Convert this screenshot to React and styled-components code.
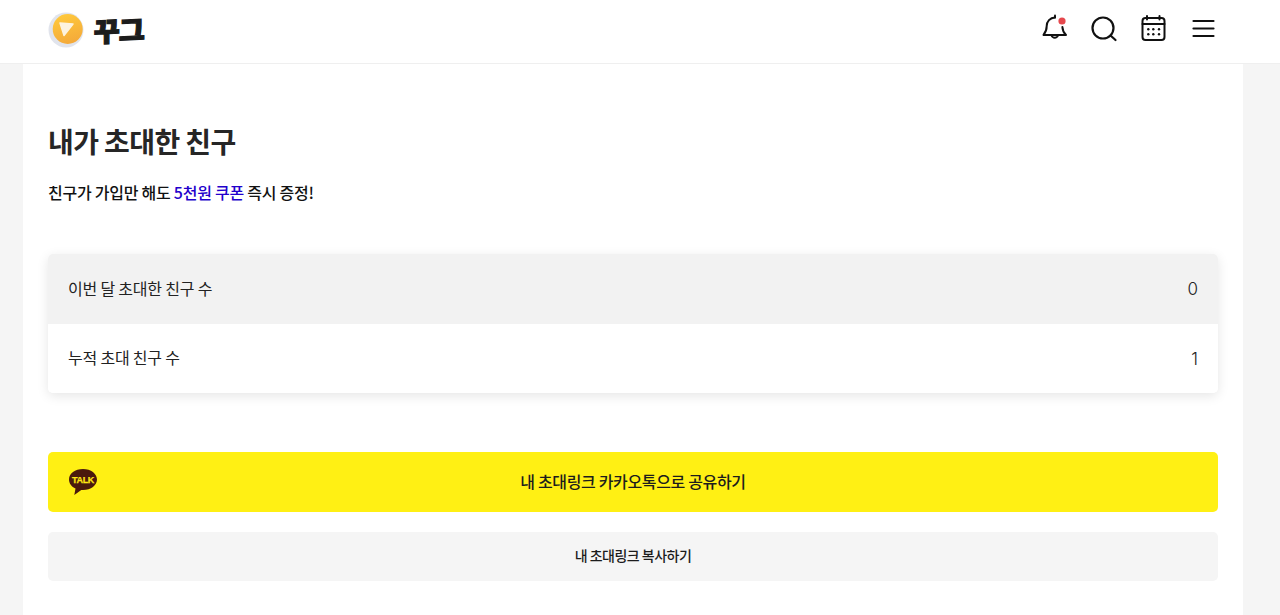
import React from 'react';
import styled, { createGlobalStyle } from 'styled-components';

const Global = createGlobalStyle`
  html, body {
    margin: 0;
    height: 615px;
    overflow: hidden;
    background: #f5f5f5;
    font-family: "Noto Sans CJK KR", "Noto Sans", sans-serif;
    color: #111;
  }
  * { box-sizing: border-box; }
`

const Header = styled.header`
  height: 64px;
  background: #fff;
  border-bottom: 1px solid #efefef;
`
const HeaderInner = styled.div`
  width: 1220px;
  height: 63px;
  margin-left: 23px;
  padding: 0 25px;
  display: flex;
  align-items: center;
  justify-content: space-between;
`
const Brand = styled.div`
  display: flex;
  align-items: center;
  gap: 10px;
  margin-bottom: 4px;
`
const Wordmark = styled.span`
  font-size: 27px;
  line-height: 30px;
  font-weight: 900;
  letter-spacing: -1px;
  color: #1c1c1c;
  transform: skewY(-3deg) scaleX(1.05);
  -webkit-text-stroke: 1.2px #1c1c1c;
`
const Icons = styled.div`
  display: flex;
  align-items: center;
  gap: 20px;
  margin-right: -1px;
  margin-bottom: 7px;
`
const IconSvg = styled.svg`
  width: 30px;
  height: 30px;
  display: block;
  fill: none;
  stroke: #111;
  stroke-width: 2;
  stroke-linecap: round;
  stroke-linejoin: round;
`
const Main = styled.main`
  width: 1220px;
  height: 551px;
  margin-left: 23px;
  padding: 59px 25px 0;
  background: #fff;
`
const Title = styled.h1`
  margin: 0;
  font-size: 28px;
  line-height: 36px;
  font-weight: 700;
  letter-spacing: -0.6px;
  color: #262626;
`
const Sub = styled.p`
  margin: 21px 0 0;
  font-size: 16px;
  line-height: 24px;
  font-weight: 500;
  letter-spacing: -0.25px;
  color: #111;
`
const Accent = styled.span`
  color: #2200cc;
`
const Stats = styled.div`
  margin-top: 50px;
  border-radius: 5px;
  box-shadow: 0 3px 12px rgba(0, 0, 0, 0.1);
  overflow: hidden;
`
const StatRow = styled.div`
  height: ${p => p.$tall ? 70 : 69}px;
  padding: 0 20px;
  display: flex;
  align-items: center;
  justify-content: space-between;
  background: ${p => p.$shaded ? '#f2f2f2' : '#fff'};
  font-size: 16px;
  letter-spacing: -0.2px;
  color: #222;
`
const StatLabel = styled.span`
  margin-bottom: 3px;
`
const StatValue = styled.span`
  font-family: Inter, "Liberation Sans", sans-serif;
  font-size: 17px;
  font-weight: 300;
  letter-spacing: 0;
`
const KakaoButton = styled.button`
  position: relative;
  display: block;
  width: 100%;
  height: 60px;
  margin-top: 59px;
  padding: 0 0 2px;
  border: 0;
  border-radius: 5px;
  background: #fff014;
  font: 500 16px/58px "Noto Sans CJK KR", sans-serif;
  letter-spacing: -0.35px;
  color: #1c1c1c;
`
const TalkBadge = styled.svg`
  position: absolute;
  left: 20px;
  top: 16px;
  width: 30px;
  height: 28px;
`
const TalkLabel = styled.text`
  font: 700 9px "Liberation Sans", sans-serif;
  fill: #ffe812;
  stroke: #ffe812;
  stroke-width: 0.25px;
  letter-spacing: -0.3px;
`
const CopyButton = styled.button`
  display: block;
  width: 100%;
  height: 49px;
  margin-top: 20px;
  padding: 0 0 2px;
  border: 0;
  border-radius: 5px;
  background: #f5f5f5;
  font: 500 14px/47px "Noto Sans CJK KR", sans-serif;
  letter-spacing: -0.5px;
  color: #1c1c1c;
`

const Logo = () => (
    <svg width="37" height="36" viewBox="0 0 37 36">
        <defs>
            <linearGradient id="coin" x1="0.3" y1="0" x2="0.6" y2="1">
                <stop offset="0" stopColor="#ffc93c"/>
                <stop offset="1" stopColor="#f4a93a"/>
            </linearGradient>
        </defs>
        <circle cx="18" cy="18" r="17.5" fill="#e1e4ec"/>
        <circle cx="19.700" cy="17" r="15" fill="url(#coin)"/>
        <path d="M12 11 L25 12 L16 23.500 Z" fill="#fdf3df" stroke="#fdf3df" strokeWidth="1.500" strokeLinejoin="round"/>
    </svg>
);

const Bell = () => (
    <IconSvg viewBox="0 0 30 30">
        <path d="M16 4.500c-5 .2-8.300 4-8.300 8.600 0 4.500-1.200 6.500-3.200 8.900h22.500c-2.300-2.300-3.500-4.500-3.600-8"/>
        <path d="M16 4.500V2.500"/>
        <path d="M12.500 22.500a3.500 3.500 0 0 0 6.500 0"/>
        <circle cx="23" cy="8" r="3.600" fill="#e5484d" stroke="none"/>
    </IconSvg>
);

const Search = () => (
    <IconSvg viewBox="0 0 30 30">
        <circle cx="14" cy="15" r="10.500" strokeWidth="2.200"/>
        <path d="M21.500 22.500 L26.500 27" strokeWidth="2.200"/>
    </IconSvg>
);

const Calendar = () => (
    <IconSvg viewBox="0 0 30 30" strokeWidth="2.200">
        <rect x="3.500" y="5" width="22" height="22" rx="3"/>
        <path d="M3.500 11h22M8 3v3.500M20.500 3v3.500"/>
        <g fill="#111" stroke="none">
            <circle cx="9.300" cy="16.300" r="1.200"/>
            <circle cx="14.300" cy="16.300" r="1.200"/>
            <circle cx="20" cy="16.300" r="1.200"/>
            <circle cx="9.300" cy="21.300" r="1.200"/>
            <circle cx="14.300" cy="21.300" r="1.200"/>
            <circle cx="20" cy="21.300" r="1.200"/>
        </g>
    </IconSvg>
);

const Menu = () => (
    <IconSvg viewBox="0 0 30 30">
        <path d="M4.500 8h20M4.500 15.500h20M4.500 23h20" strokeWidth="2.200"/>
    </IconSvg>
);

const App = () => {
    return (
        <>
            <Global/>
            <Header>
                <HeaderInner>
                    <Brand>
                        <Logo/>
                        <Wordmark>꾸그</Wordmark>
                    </Brand>
                    <Icons>
                        <Bell/>
                        <Search/>
                        <Calendar/>
                        <Menu/>
                    </Icons>
                </HeaderInner>
            </Header>
            <Main>
                <Title>내가 초대한 친구</Title>
                <Sub>친구가 가입만 해도 <Accent>5천원 쿠폰</Accent> 즉시 증정!</Sub>
                <Stats>
                    <StatRow $shaded $tall>
                        <StatLabel>이번 달 초대한 친구 수</StatLabel>
                        <StatValue>0</StatValue>
                    </StatRow>
                    <StatRow>
                        <StatLabel>누적 초대 친구 수</StatLabel>
                        <StatValue>1</StatValue>
                    </StatRow>
                </Stats>
                <KakaoButton>
                    <TalkBadge viewBox="0 0 30 28">
                        <path d="M15 1C7 1 1 5.500 1 11.500c0 4 2.600 7.300 6.500 9.100L6.300 27l7-5.100c.6.100 1.100.1 1.700.1 8 0 14-4.700 14-10.500S23 1 15 1z" fill="#4a1a0c"/>
                        <TalkLabel x="15" y="15" textAnchor="middle">TALK</TalkLabel>
                    </TalkBadge>
                    내 초대링크 카카오톡으로 공유하기
                </KakaoButton>
                <CopyButton>내 초대링크 복사하기</CopyButton>
            </Main>
        </>
    );
};

export default App;
